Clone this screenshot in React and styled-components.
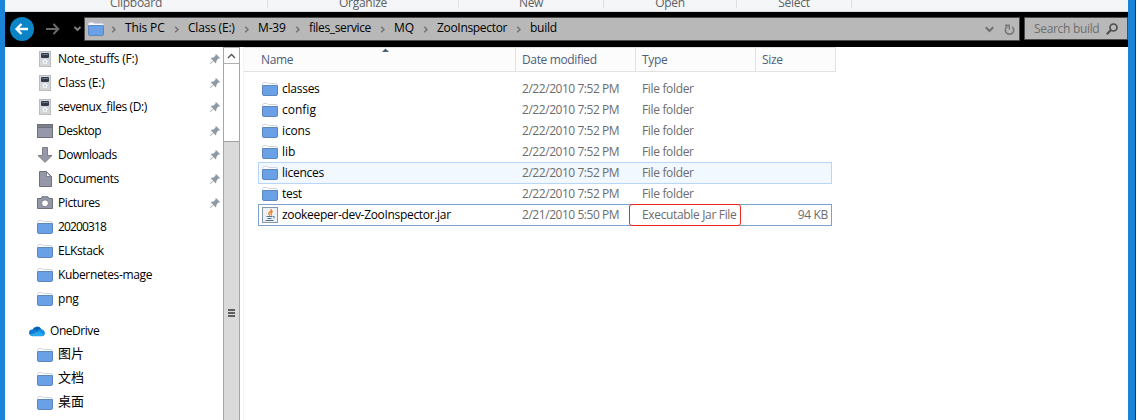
import React from "react";
import styled, { createGlobalStyle } from "styled-components";

const Global = createGlobalStyle`
  *{box-sizing:border-box}
  html,body{margin:0;padding:0;background:#fff;overflow:hidden}
  body{font:12px/16px "Open Sans","Noto Sans","Noto Sans CJK SC",sans-serif;color:#000}
  svg{display:block;flex:none}
`;
const Window = styled.div`
  width:1137px;height:420px;display:flex;flex-direction:column;overflow:hidden;
  border-left:5px solid #1a84d8;background:#fff;
`;
const Frame = styled.div`display:flex;height:420px;`;
const Main = styled.div`width:1123px;display:flex;flex-direction:column;flex:none;`;
const RightEdge = styled.div`width:8px;background:#1a84d8;border-right:1px solid #123a5e;flex:none;`;
const Ribbon = styled.div`
  height:12px;flex:none;display:flex;background:#f4f6f8;border-bottom:1px solid #dadbdc;overflow:hidden;
`;
const Group = styled.div`
  width:${p => p.$w}px;height:8px;border-right:1px solid #dfe0e2;
  color:#5c5f63;display:flex;justify-content:center;
`;
const GroupLabel = styled.span`margin-top:-5px;height:16px;white-space:nowrap;letter-spacing:-.28px;`;
const NavBar = styled.div`height:35px;flex:none;background:#000;display:flex;align-items:flex-start;padding-top:5px;`;
const NavButtons = styled.div`width:79px;height:24px;display:flex;align-items:center;`;
const Address = styled.div`
  width:936px;height:24px;border:1px solid #4a4a4a;background:#b8b8b8;display:flex;align-items:center;padding-left:3px;
`;
const Crumb = styled.span`width:${p => p.$w}px;white-space:nowrap;letter-spacing:${p => p.$ls}px;height:18px;color:#000;`;
const CrumbGap = styled.span`width:${p => p.$w}px;display:flex;padding-left:${p => p.$l}px;`;
const AddressTools = styled.div`margin-left:auto;display:flex;gap:10px;padding:1px 4px 0 0;align-items:center;`;
const Search = styled.div`
  width:104px;height:23px;margin-left:4px;border:1px solid #4a4a4a;background:#b8b8b8;color:#6e6e6e;
  display:flex;align-items:center;padding-left:9px;gap:7px;
`;
const SearchText = styled.span`width:65px;white-space:nowrap;letter-spacing:-.32px;`;
const Body = styled.div`flex:1;display:flex;min-height:0;`;
const Sidebar = styled.div`width:218px;flex:none;`;
const SideRow = styled.div`
  height:24px;display:flex;align-items:center;padding-left:${p => (p.$root ? 24 : 32)}px;padding-right:3px;
  margin-top:${p => (p.$root ? 8 : 0)}px;
`;
const SideLabel = styled.span`
  margin-left:5px;flex:1;white-space:nowrap;letter-spacing:${p => p.$ls || 0}px;font-size:${p => (p.$cjk ? 13 : 12)}px;
  padding-bottom:${p => (p.$cjk ? 4 : 0)}px;
`;
const Scroll = styled.div`
  width:17px;flex:none;display:flex;flex-direction:column;border:solid #a6a6a6;border-width:0 1px;
`;
const ScrollUp = styled.div`height:17px;border:solid #b0b0b0;border-width:1px 0;display:flex;align-items:center;justify-content:center;`;
const Track = styled.div`height:77px;`;
const Thumb = styled.div`
  flex:1;background:#dadada;border-top:1px solid #a0a0a0;display:flex;flex-direction:column;align-items:center;gap:1px;padding-top:167px;
`;
const Grip = styled.div`width:7px;height:2px;background:#606060;`;
const List = styled.div`flex:1;margin-left:3px;border-left:1px solid #f3f3f3;`;
const Header = styled.div`
  width:592px;height:25px;display:flex;background:#fcfcfc;border:1px solid #e2e2e2;border-left:0;color:#4c607a;
`;
const HeadCell = styled.div`
  width:${p => p.$w}px;padding:4px 0 0 ${p => p.$l}px;border-right:${p => (p.$last ? 0 : 1)}px solid #e2e2e2;
  letter-spacing:-.36px;display:flex;white-space:nowrap;
`;
const SortMark = styled.div`margin:-4px 0 0 89px;`;
const Rows = styled.div`padding:6px 0 0 14px;`;
const rowStates = {
  hover: "height:22px;margin-bottom:-1px;outline:1px solid #b8d6fb;outline-offset:-1px;background:#f2f8ff;",
  focus: "height:22px;outline:1px solid #7da2ce;outline-offset:-1px;",
};
const Row = styled.div`
  width:574px;height:21px;display:flex;align-items:center;color:#6d6d6d;padding-left:4px;
  ${p => rowStates[p.$state]}
`;
const Name = styled.span`width:240px;margin-left:4px;color:#000;white-space:nowrap;letter-spacing:${p => p.$ls || 0}px;`;
const DateText = styled.span`width:107px;white-space:nowrap;letter-spacing:-.45px;`;
const Type = styled.span`
  position:relative;z-index:1;
  width:112px;height:22px;padding:2px 0 0 12px;border:1px solid ${p => (p.$marked ? "#ee2a20" : "transparent")};
  border-radius:3px;white-space:nowrap;letter-spacing:-.34px;
`;
const Size = styled.span`margin-left:auto;padding-right:4px;letter-spacing:-.35px;`;

const Folder = () => (
  <svg width="16" height="16" viewBox="0 0 16 16">
    <path d="M.5 6V3.500Q.5 1.500 2 1.500H5L6 2.500H14Q15.500 2.500 15.500 4V6" fill="#fff" stroke="#d0d6e6" />
    <path d="M.5 5Q.5 4.500 1 4.500H15Q15.500 4.500 15.500 5V13Q15.500 14.500 14 14.500H2Q.5 14.500 .5 13Z" fill="#6aa1e6" stroke="#5c86bd" />
  </svg>
);
const Drive = () => (
  <svg width="16" height="16" viewBox="0 0 16 16">
    <rect x="2.500" y=".5" width="11" height="15" fill="#d4d6da" stroke="#b9bcc1" />
    <rect x="4" y="2" width="8" height="5" rx="1" fill="#343b4a" />
    <path d="M5 3H11V4H5Z" fill="#697689" />
    <circle cx="8" cy="10.700" r="3.300" fill="#eceef0" stroke="#c3c6ca" strokeWidth=".7" />
    <circle cx="8" cy="10.700" r="1" fill="#cfd2d6" />
  </svg>
);
const Desktop = () => (
  <svg width="16" height="16" viewBox="0 0 16 16">
    <rect x=".5" y="1.500" width="15" height="13" fill="#9498a8" stroke="#6d7078" />
    <path d="M1 2H15V4H1Z" fill="#7d808b" /><path d="M1 4.500H15" stroke="#6d7078" />
  </svg>
);
const Download = () => (
  <svg width="16" height="16" viewBox="0 0 16 16">
    <path d="M5.500 .5H10.500V8.500H15L8 15.300L1 8.500H5.500Z" fill="#9498a8" stroke="#7c7e84" />
  </svg>
);
const Doc = () => (
  <svg width="16" height="16" viewBox="0 0 16 16">
    <path d="M2.500 .5H9.500L14.500 5.500V15.500H2.500Z" fill="#9498a8" stroke="#6d7078" />
    <path d="M9.500 1V5.500H14Z" fill="#fff" stroke="#6d7078" strokeWidth=".8" />
  </svg>
);
const Camera = () => (
  <svg width="16" height="16" viewBox="0 0 16 16">
    <path d="M.5 3.500H4L5 1.800H11L12 3.500H15.500V13.500H.5Z" fill="#9498a8" stroke="#6d7078" />
    <circle cx="8" cy="8.300" r="3.500" fill="#fff" stroke="#777b85" />
  </svg>
);
const Cloud = () => (
  <svg width="16" height="16" viewBox="0 0 16 16">
    <path d="M3.300 7A5 5 0 0 1 12.300 6L10 11H4Z" fill="#0563b8" />
    <path d="M3.500 6.500Q6 5.600 8 7.500L10 13H3A3.200 3.200 0 0 1 3.500 6.500Z" fill="#0f7bd4" />
    <path d="M8.500 8.500Q9.500 5.500 12.200 6Q15.800 7 15.900 10.200Q15.800 13 13 13H7Z" fill="#1490df" />
    <path d="M1.300 11.800L9.500 8.300L15.200 12Q14.400 13.200 13 13.200H3.300Q2 13 1.300 11.800Z" fill="#28a8ea" />
  </svg>
);
const Pin = () => (
  <svg width="10" height="10" viewBox="0 0 10 10">
    <path d="M6 0L10 4L9 4.700L8.500 4.500L6.500 6.500L6.300 8.500L5.500 9.200L3.400 7L.5 10L0 9.500L3 6.500L.8 4.400L1.500 3.700L3.700 3.500L5.600 1.500L5.300 1Z" fill="#8e9aa3" />
  </svg>
);
const Jar = () => (
  <svg width="16" height="16" viewBox="0 0 16 16">
    <rect x=".5" y=".5" width="15" height="15" fill="#edf1f5" stroke="#8597a9" />
    <path d="M9 2Q10 3.800 7.800 5Q5.600 6.600 8 8.500M10.800 4.300Q7.800 5.700 9.500 7.200L9 8.500" fill="none" stroke="#e9811f" strokeWidth="1.300" />
    <path d="M4.500 9.500H10.500M5.500 11.500H9.500M3.500 13.500H11.500M11 9.500Q13.800 9.300 11.300 11.500" fill="none" stroke="#4f718f" />
  </svg>
);
const Chevron = () => (
  <svg width="6" height="7" viewBox="0 0 6 7"><path d="M1.200 .7L4 3.500L1.200 6.300" fill="none" stroke="#737373" strokeWidth="1.500" /></svg>
);
const Down = () => (
  <svg width="9" height="7" viewBox="0 0 9 7"><path d="M.8 1.300L4.500 5L8.200 1.300" fill="none" stroke="#707070" strokeWidth="2" /></svg>
);
const NavIcons = () => (
  <svg width="79" height="24" viewBox="0 0 79 24">
    <circle cx="17" cy="12" r="12" fill="#0a84c6" />
    <path d="M23 12H12M16.500 7L11.500 12L16.500 17" fill="none" stroke="#fff" strokeWidth="2.300" />
    <path d="M41 12H53M48.500 7L53.300 12L48.500 17" fill="none" stroke="#6a6a6a" strokeWidth="2" />
    <path d="M69.500 10L72.500 13L75.500 10" fill="none" stroke="#858585" strokeWidth="1.800" />
  </svg>
);
const Refresh = () => (
  <svg width="11" height="12" viewBox="0 0 11 12">
    <path d="M3.500 2.300A4.200 4.200 0 1 0 8.300 2.800" fill="none" stroke="#777" strokeWidth="1.600" />
    <path d="M1 1.300H5.300V5.500" fill="none" stroke="#777" strokeWidth="1.500" />
  </svg>
);
const Magnifier = () => (
  <svg width="12" height="12" viewBox="0 0 12 12">
    <circle cx="7.500" cy="4.500" r="3.500" fill="none" stroke="#4e4e4e" strokeWidth="1.700" />
    <path d="M5 7L.8 11.200" stroke="#4e4e4e" strokeWidth="2" />
  </svg>
);

const side = [
  [Drive, "Note_stuffs (F:)", 1, -.21], [Drive, "Class (E:)", 1, -.22], [Drive, "sevenux_files (D:)", 1, -.4],
  [Desktop, "Desktop", 1, -.44], [Download, "Downloads", 1, -.42], [Doc, "Documents", 1, -.37], [Camera, "Pictures", 1, -.4],
  [Folder, "20200318", 0, -.85], [Folder, "ELKstack", 0, -.42], [Folder, "Kubernetes-mage", 0, -.36], [Folder, "png", 0, -.2],
  [Cloud, "OneDrive", 0, -.45], [Folder, "图片", 0, 0], [Folder, "文档", 0, 0], [Folder, "桌面", 0, 0],
];
const crumbs = [
  [21, 7, "This PC", 40, -.15], [23, 9, "Class (E:)", 47, -.2], [23, 9, "M-39", 28, -.15],
  [23, 9, "files_service", 62, -.36], [23, 9, "MQ", 20, -.15], [23, 9, "ZooInspector", 70, -.32], [23, 9, "build", 30, -.25],
];
const files = [
  ["classes", -.25], ["config", 0], ["icons", -.15], ["lib", 0], ["licences", -.28], ["test", -.3], ["zookeeper-dev-ZooInspector.jar", -.32],
];

export default function App() {
  return (
    <Window>
      <Global />
      <Frame>
        <Main>
          <Ribbon>
            <Group $w={263}><GroupLabel>Clipboard</GroupLabel></Group>
            <Group $w={191}><GroupLabel>Organize</GroupLabel></Group>
            <Group $w={145}><GroupLabel>New</GroupLabel></Group>
            <Group $w={133}><GroupLabel>Open</GroupLabel></Group>
            <Group $w={115}><GroupLabel>Select</GroupLabel></Group>
          </Ribbon>
          <NavBar>
            <NavButtons><NavIcons /></NavButtons>
            <Address>
              <Folder />
              {crumbs.map(([g, l, t, w, ls]) => (
                <React.Fragment key={t}><CrumbGap $w={g} $l={l}><Chevron /></CrumbGap><Crumb $w={w} $ls={ls}>{t}</Crumb></React.Fragment>
              ))}
              <AddressTools><Down /><Refresh /></AddressTools>
            </Address>
            <Search><SearchText>Search build</SearchText><Magnifier /></Search>
          </NavBar>
          <Body>
            <Sidebar>
              {side.map(([Icon, t, pin, ls], i) => (
                <SideRow key={t} $root={t === "OneDrive"}>
                  <Icon /><SideLabel $ls={ls} $cjk={i > 11}>{t}</SideLabel>{pin ? <Pin /> : null}
                </SideRow>
              ))}
            </Sidebar>
            <Scroll>
              <ScrollUp><svg width="9" height="6" viewBox="0 0 9 6"><path d="M1 5L4.500 1.500L8 5" fill="none" stroke="#505050" strokeWidth="1.300" /></svg></ScrollUp>
              <Track />
              <Thumb><Grip /><Grip /><Grip /></Thumb>
            </Scroll>
            <List>
              <Header>
                <HeadCell $w={272} $l={17}>Name<SortMark><svg width="7" height="4"><path d="M0 4L3.500 .5L7 4Z" fill="#4c607a" /></svg></SortMark></HeadCell>
                <HeadCell $w={120} $l={6}>Date modified</HeadCell>
                <HeadCell $w={120} $l={6}>Type</HeadCell>
                <HeadCell $w={79} $l={6} $last>Size</HeadCell>
              </Header>
              <Rows>
                {files.map(([t, ls], i) => (
                  <Row key={t} $state={i === 4 ? "hover" : i === 6 ? "focus" : undefined}>
                    {i === 6 ? <Jar /> : <Folder />}
                    <Name $ls={ls}>{t}</Name>
                    <DateText>{i === 6 ? "2/21/2010 5:50 PM" : "2/22/2010 7:52 PM"}</DateText>
                    <Type $marked={i === 6}>{i === 6 ? "Executable Jar File" : "File folder"}</Type>
                    {i === 6 && <Size>94 KB</Size>}
                  </Row>
                ))}
              </Rows>
            </List>
          </Body>
        </Main>
        <RightEdge />
      </Frame>
    </Window>
  );
}
